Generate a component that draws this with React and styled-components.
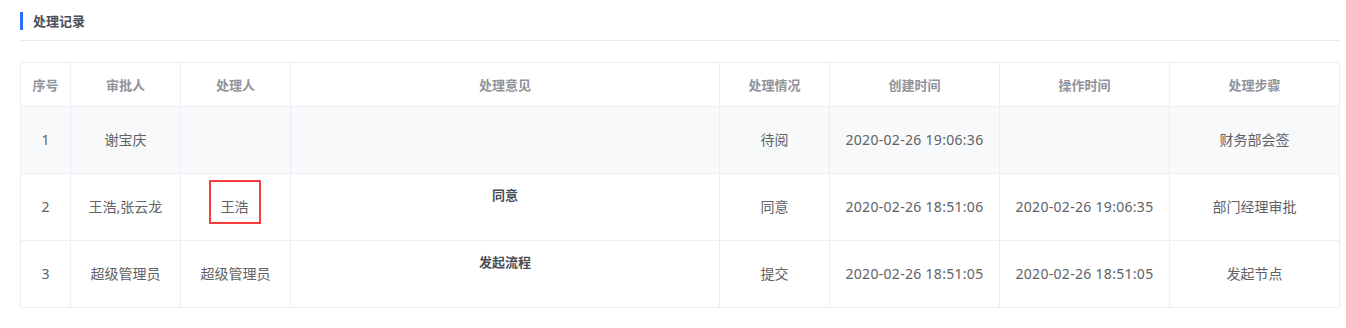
import styled, { createGlobalStyle } from "styled-components";

const GlobalStyle = createGlobalStyle`
  html, body {
    margin: 0;
    padding: 0;
    background: #fff;
    font-family: "Noto Sans", "Noto Sans CJK SC", sans-serif;
  }
`;

const Page = styled.div`
  padding: 12px 6px 0 20px;
  width: 1320px;
`;

const Header = styled.div`
  display: flex;
  align-items: center;
  height: 18px;
  padding-bottom: 10px;
  border-bottom: 1px solid #e8ebf1;
`;

const Bar = styled.span`
  width: 3px;
  height: 18px;
  background: #2d6cff;
  margin-right: 10px;
`;

const Title = styled.h3`
  margin: 0;
  font-size: 13px;
  font-weight: 700;
  color: #4a4d55;
  line-height: 18px;
`;

const Table = styled.table`
  margin-top: 21px;
  width: 1320px;
  border-collapse: collapse;
  table-layout: fixed;
  font-size: 14px;
  color: #606266;
`;

const Th = styled.th`
  height: 43px;
  padding: 0;
  border: 1px solid #ebeef5;
  font-weight: 700;
  font-size: 13px;
  color: #909399;
  text-align: center;
  background: #fff;
`;

const Tr = styled.tr`
  background: ${(p) => (p.$shaded ? "#f8f9fb" : "#fff")};
`;

const Td = styled.td`
  height: 66px;
  padding: 0;
  border: 1px solid #ebeef5;
  text-align: center;
  vertical-align: middle;
  line-height: 20px;
  letter-spacing: ${(p) => (p.$time ? "0.3px" : "0")};
`;

const Opinion = styled.div`
  font-weight: 700;
  font-size: 13px;
  color: #4a4d55;
  line-height: 20px;
`;

const Attachments = styled.div`
  min-height: 24px;
`;

const Marked = styled.span`
  display: inline-block;
  border: 2px solid #f53d3d;
  padding: 15px 10px 5px;
  line-height: 20px;
  margin-top: -11px;
  margin-left: -2px;
`;

const cols = [50, 110, 110, 429, 110, 170, 170, 170];
const heads = ["序号", "审批人", "处理人", "处理意见", "处理情况", "创建时间", "操作时间", "处理步骤"];

const rows = [
  { no: 1, approver: "谢宝庆", handler: "", opinion: "", status: "待阅", created: "2020-02-26 19:06:36", done: "", step: "财务部会签" },
  { no: 2, approver: "王浩,张云龙", handler: "王浩", marked: true, opinion: "同意", status: "同意", created: "2020-02-26 18:51:06", done: "2020-02-26 19:06:35", step: "部门经理审批" },
  { no: 3, approver: "超级管理员", handler: "超级管理员", opinion: "发起流程", status: "提交", created: "2020-02-26 18:51:05", done: "2020-02-26 18:51:05", step: "发起节点" },
];

export default function App() {
  return (
    <Page>
      <GlobalStyle />
      <Header>
        <Bar />
        <Title>处理记录</Title>
      </Header>
      <Table>
        <colgroup>
          {cols.map((w, i) => (
            <col key={i} style={{ width: w }} />
          ))}
        </colgroup>
        <thead>
          <tr>
            {heads.map((h) => (
              <Th key={h}>{h}</Th>
            ))}
          </tr>
        </thead>
        <tbody>
          {rows.map((r, i) => (
            <Tr key={r.no} $shaded={i === 0}>
              <Td>{r.no}</Td>
              <Td>{r.approver}</Td>
              <Td>{r.marked ? <Marked>{r.handler}</Marked> : r.handler}</Td>
              <Td>
                {r.opinion && (
                  <>
                    <Opinion>{r.opinion}</Opinion>
                    <Attachments />
                  </>
                )}
              </Td>
              <Td>{r.status}</Td>
              <Td $time>{r.created}</Td>
              <Td $time>{r.done}</Td>
              <Td>{r.step}</Td>
            </Tr>
          ))}
        </tbody>
      </Table>
    </Page>
  );
}
